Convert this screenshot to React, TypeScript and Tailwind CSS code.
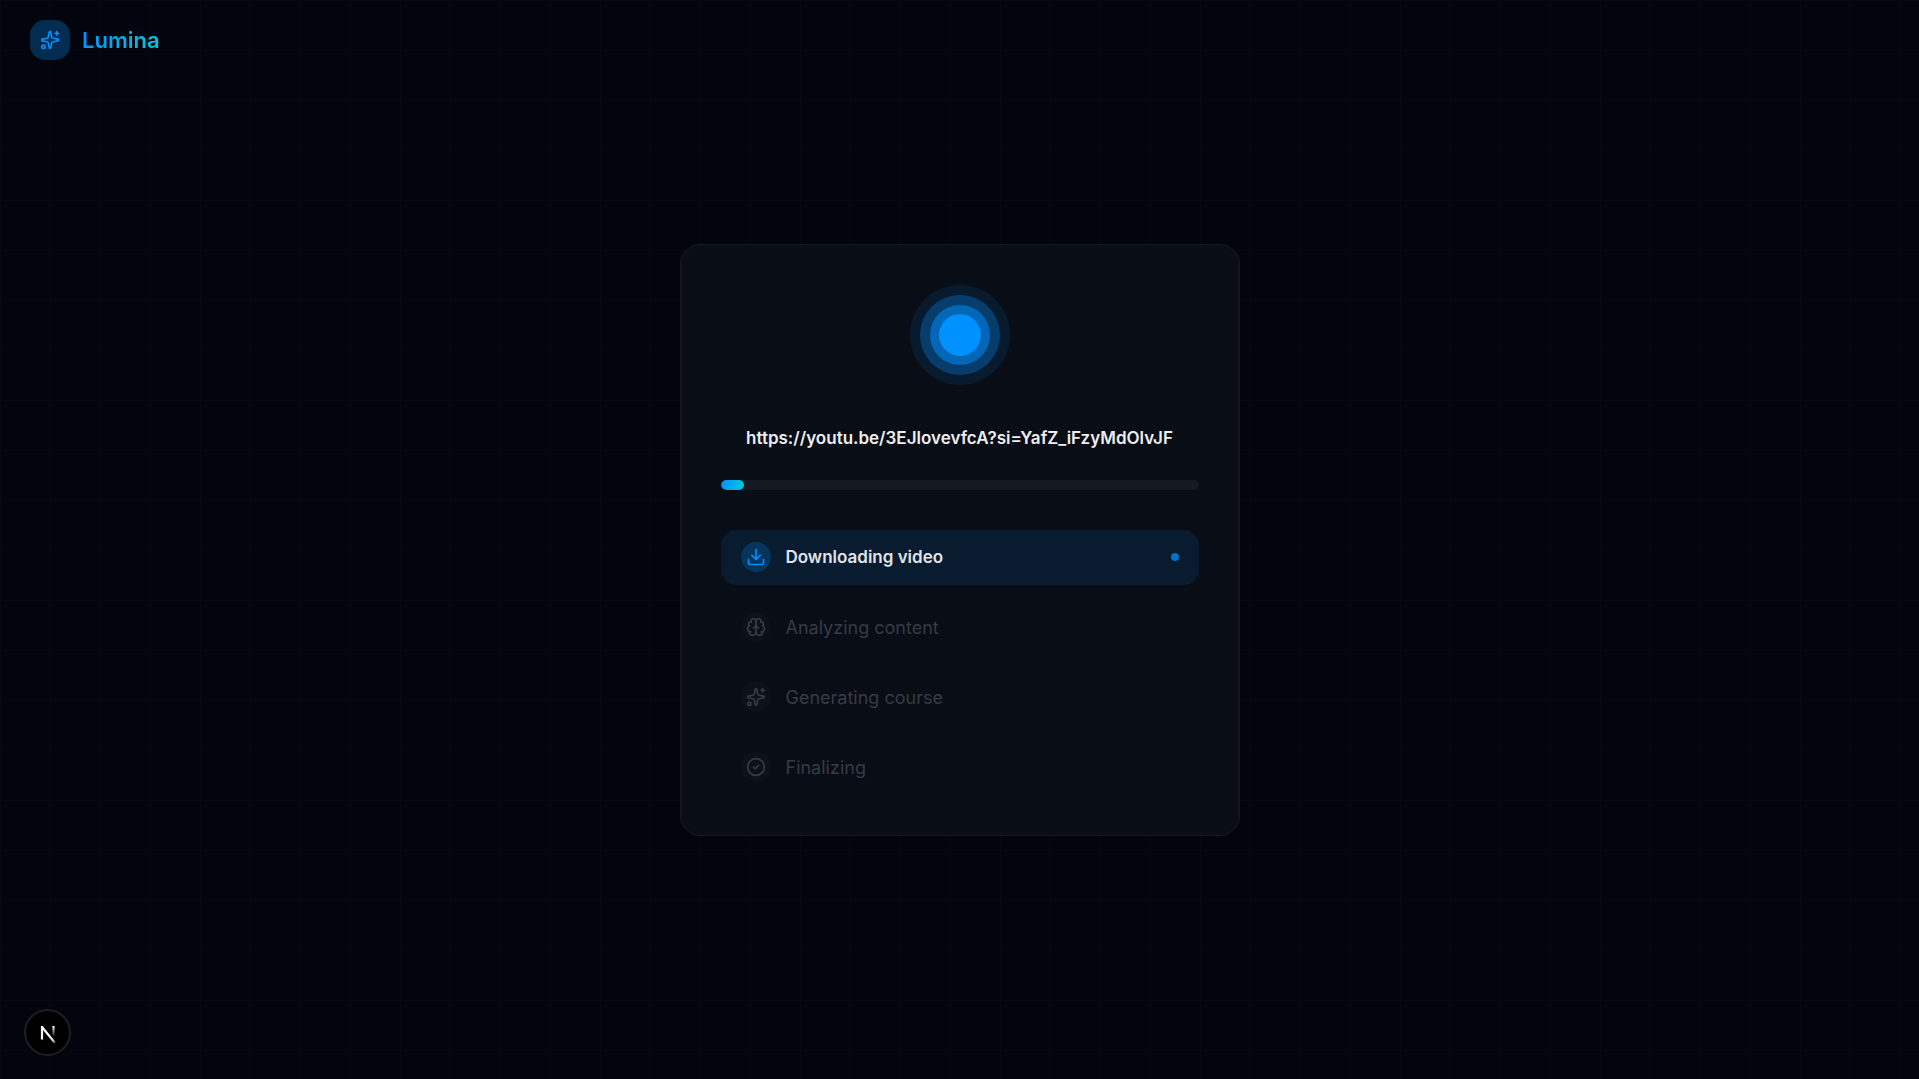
import { Brain, CircleCheck, Download, Sparkles, type LucideIcon } from "lucide-react";

const steps: { label: string; icon: LucideIcon; active: boolean }[] = [
  { label: "Downloading video", icon: Download, active: true },
  { label: "Analyzing content", icon: Brain, active: false },
  { label: "Generating course", icon: Sparkles, active: false },
  { label: "Finalizing", icon: CircleCheck, active: false },
];

const progress = 5;

function Orb() {
  return (
    <div className="grid size-[100px] place-items-center rounded-full bg-[#0090ff]/10">
      <div className="grid size-20 place-items-center rounded-full bg-[#0090ff]/30">
        <div className="grid size-[60px] place-items-center rounded-full bg-[#0090ff]/50">
          <div className="size-[42px] rounded-full bg-[#0090ff]" />
        </div>
      </div>
    </div>
  );
}

function NextLogo() {
  return (
    <svg viewBox="0 0 40 40" className="size-10" fill="none" aria-hidden="true">
      <defs>
        <linearGradient id="diag" x1="21" y1="22" x2="28" y2="31" gradientUnits="userSpaceOnUse">
          <stop stopColor="white" />
          <stop offset="0.6" stopColor="white" stopOpacity="0.8" />
          <stop offset="1" stopColor="white" stopOpacity="0" />
        </linearGradient>
        <linearGradient id="stem" x1="26" y1="13" x2="26" y2="24" gradientUnits="userSpaceOnUse">
          <stop stopColor="white" />
          <stop offset="1" stopColor="white" stopOpacity="0" />
        </linearGradient>
      </defs>
      <path d="M14 14L27 30" stroke="url(#diag)" strokeWidth="2.2" />
      <path d="M14 26.5V13" stroke="white" strokeWidth="2.2" />
      <path d="M25.5 13V23.5" stroke="url(#stem)" strokeWidth="2.2" />
    </svg>
  );
}

export default function App() {
  return (
    <div className="relative flex min-h-screen flex-col items-center justify-center bg-[#03050e] bg-[linear-gradient(to_right,rgba(255,255,255,0.012)_1px,transparent_1px),linear-gradient(to_bottom,rgba(255,255,255,0.012)_1px,transparent_1px)] bg-size-[50px_50px] font-['Inter',sans-serif] text-[#edeef0]">
      <header className="absolute left-[30px] top-5 flex items-center gap-3">
        <div className="grid size-10 place-items-center rounded-[15px] bg-[#022d50] text-[#0090ff]">
          <Sparkles size={20} />
        </div>
        <span className="bg-linear-to-r from-[#0090ff] to-[#00c8d8] bg-clip-text text-[22px] font-semibold text-transparent">
          Lumina
        </span>
      </header>

      <main className="flex w-full max-w-[560px] flex-col items-center rounded-[20px] border border-[#161a23] bg-[#090d15] p-10">
        <Orb />
        <h1 className="mt-10 text-[17px] leading-[27px] font-semibold">
          https://youtu.be/3EJlovevfcA?si=YafZ_iFzyMdOlvJF
        </h1>
        <div
          role="progressbar"
          aria-label="Course progress"
          aria-valuenow={progress}
          className="mt-7 h-2.5 w-full overflow-hidden rounded-full bg-[#151a22]"
        >
          <div
            className="h-full rounded-full bg-linear-to-r from-[#0090ff] to-[#00c8d8]"
            style={{ width: `${progress}%` }}
          />
        </div>
        <ul className="mt-10 flex w-full flex-col gap-[15px]">
          {steps.map(({ label, icon: Icon, active }) => (
            <li
              key={label}
              className={
                active
                  ? "flex h-[55px] items-center rounded-[15px] bg-[#081b2f] px-5 text-[17px] leading-[29px] font-semibold text-[#e0e3e8]"
                  : "flex h-[55px] items-center rounded-[15px] px-5 text-lg leading-[29px] text-[#373b44]"
              }
            >
              <span
                className={
                  active
                    ? "mr-[15px] grid size-[30px] place-items-center rounded-full bg-[#06355c] text-[#0090ff]"
                    : "mr-[15px] grid size-[30px] place-items-center rounded-full bg-[#0d1119]"
                }
              >
                <Icon size={20} />
              </span>
              <span>{label}</span>
              {active && <span className="ml-auto size-2 rounded-full bg-[#0471c6]" />}
            </li>
          ))}
        </ul>
      </main>

      <button
        type="button"
        aria-label="Open Next.js Dev Tools"
        className="absolute bottom-[23px] left-6 grid size-[47px] place-items-center rounded-full border-2 border-[#1f1f20] bg-black"
      >
        <NextLogo />
      </button>
    </div>
  );
}
